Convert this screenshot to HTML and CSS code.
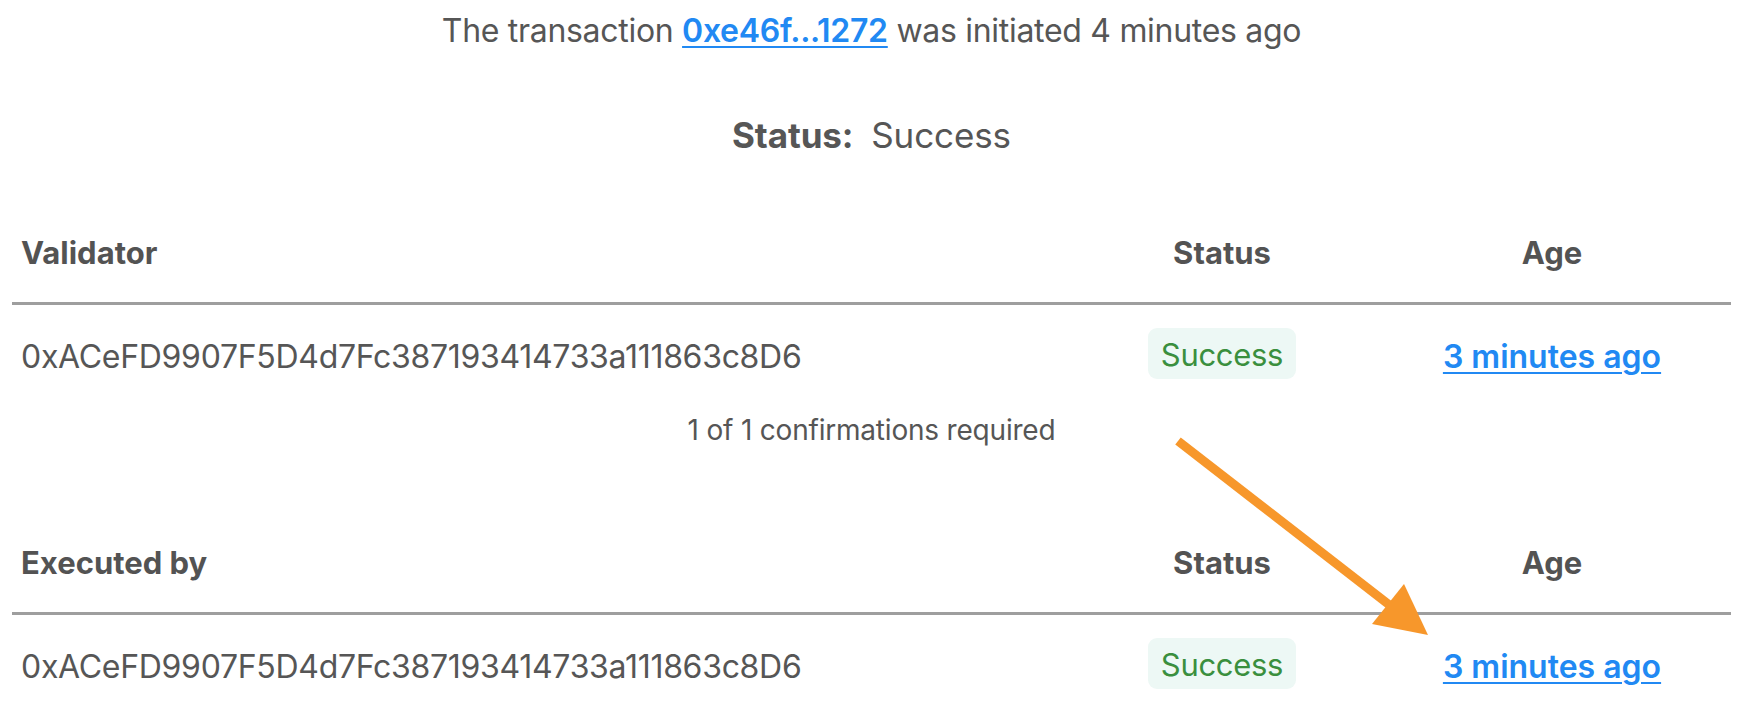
FILE: index.html
```html
<!DOCTYPE html>
<html lang="en">
<head>
<meta charset="utf-8">
<title>Transaction</title>
<link rel="stylesheet" href="styles.css">
</head>
<body>
<main class="page">
  <p class="intro">The transaction <a class="link" href="#">0xe46f...1272</a> was initiated 4 minutes ago</p>
  <p class="status-line"><span class="status-label">Status:</span> Success</p>

  <section class="table">
    <div class="row head">
      <div class="cell left">Validator</div>
      <div class="cell center">Status</div>
      <div class="cell center">Age</div>
    </div>
    <div class="row body">
      <div class="cell left text">0xACeFD9907F5D4d7Fc387193414733a111863c8D6</div>
      <div class="cell center"><span class="badge">Success</span></div>
      <div class="cell center text"><a class="link age" href="#">3 minutes ago</a></div>
    </div>
  </section>

  <p class="confirmations">1 of 1 confirmations required</p>

  <section class="table second">
    <div class="row head">
      <div class="cell left">Executed by</div>
      <div class="cell center">Status</div>
      <div class="cell center">Age</div>
    </div>
    <div class="row body">
      <div class="cell left text">0xACeFD9907F5D4d7Fc387193414733a111863c8D6</div>
      <div class="cell center"><span class="badge">Success</span></div>
      <div class="cell center text"><a class="link age" href="#">3 minutes ago</a></div>
    </div>
  </section>

  <svg class="arrow" width="300" height="230" viewBox="1150 420 300 230" aria-hidden="true">
    <line x1="1178" y1="441" x2="1392" y2="607" stroke="#f7972b" stroke-width="9"/>
    <polygon points="1428,635 1372,624 1404,584" fill="#f7972b"/>
  </svg>
</main>
</body>
</html>
```

FILE: styles.css
```css
html, body {
  margin: 0;
  padding: 0;
  background: #ffffff;
}

body {
  font-family: Inter, "Liberation Sans", sans-serif;
  color: #565656;
}

.page {
  position: relative;
  width: 1719px;
  margin-left: 12px;
  height: 718px;
}

p {
  margin: 0;
}

.intro {
  padding-top: 11px;
  text-align: center;
  font-size: 32px;
  line-height: 40px;
  letter-spacing: -0.3px;
}

.link {
  color: #2189f3;
  font-weight: 600;
  text-decoration: underline;
  text-decoration-thickness: 2px;
  text-underline-offset: 4px;
}

.status-line {
  margin-top: 60px;
  text-align: center;
  font-size: 35px;
  line-height: 48px;
  letter-spacing: -0.1px;
}

.status-label {
  font-weight: 700;
  margin-right: 8px;
}

.table {
  margin-top: 74px;
}

.table.second {
  margin-top: 95px;
}

.row {
  display: grid;
  grid-template-columns: 1fr 302px 358px;
  align-items: center;
}

.head {
  font-size: 31px;
  font-weight: 700;
  line-height: 40px;
  padding-bottom: 29px;
  border-bottom: 3px solid #9e9e9e;
  color: #535353;
}

.body {
  padding-top: 23px;
  font-size: 32px;
  line-height: 51px;
  letter-spacing: -0.3px;
}

.body .text {
  padding-top: 4px;
  line-height: 47px;
}

.cell.left {
  padding-left: 9px;
}

.cell.center {
  text-align: center;
}

.badge {
  display: inline-block;
  height: 51px;
  padding: 0 13px;
  line-height: 53px;
  background: #edf8f5;
  border-radius: 9px;
  color: #3a8f3e;
  font-size: 31px;
  letter-spacing: -0.3px;
}

.age {
  font-size: 32px;
  letter-spacing: 0;
}

.confirmations {
  margin-top: 32px;
  text-align: center;
  font-size: 28px;
  line-height: 36px;
  letter-spacing: -0.2px;
}

.arrow {
  position: absolute;
  left: 1138px;
  top: 420px;
  overflow: visible;
}
```
